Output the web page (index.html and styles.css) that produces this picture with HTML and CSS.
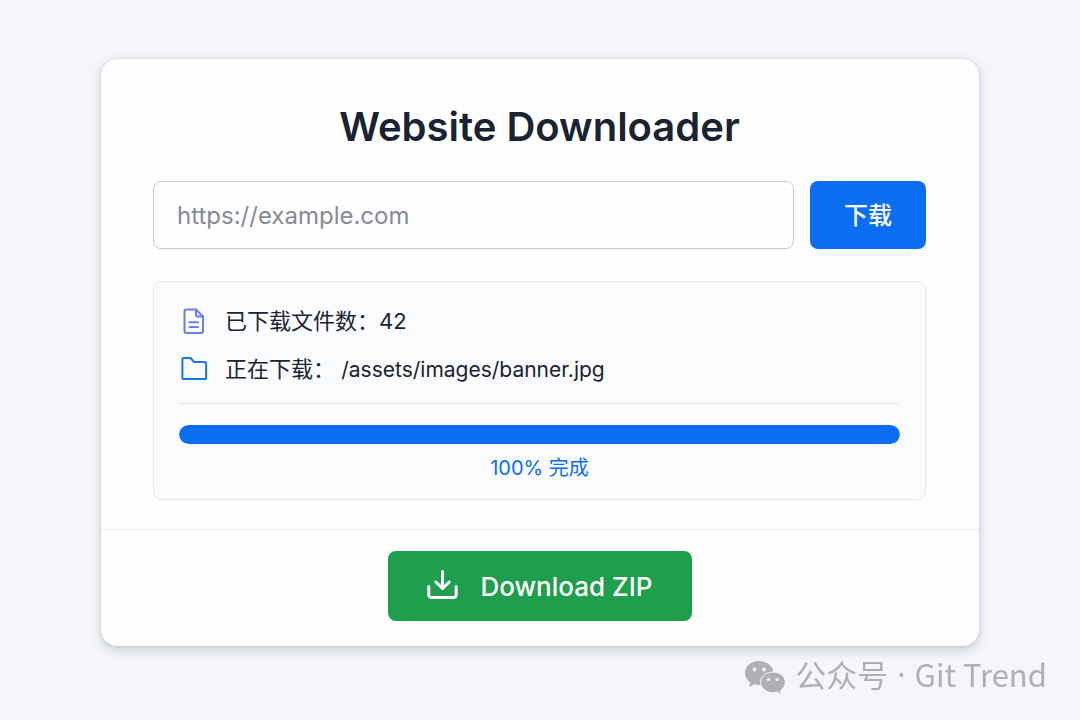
FILE: index.html
```
<!DOCTYPE html>
<html lang="zh-CN">
<head>
  <meta charset="UTF-8" />
  <meta name="viewport" content="width=device-width, initial-scale=1.0" />
  <title>Website Downloader</title>
  <link rel="stylesheet" href="styles.css">
</head>
<body>
  <!-- Downloader card -->
  <main class="card">
    <div class="card-body">
      <h1>Website Downloader</h1>

      <form class="url-form">
        <input type="url" id="urlInput" placeholder="https://example.com" aria-label="https://example.com" />
        <button type="submit" class="start-btn">下载</button>
      </form>

      <section class="status">
        <div class="status-row">
          <svg class="icon icon-file" viewBox="0 0 30 30">
            <path d="M7.5 3.500h9.500l7 7V25a2 2 0 0 1-2 2H7.500a2 2 0 0 1-2-2V5.500a2 2 0 0 1 2-2z" />
            <path d="M17 3.500V9a1.500 1.500 0 0 0 1.500 1.500H24M10.500 16.200h8.500M10.500 21h8.500" />
          </svg>
          <span class="status-label">已下载文件数：42</span>
        </div>
        <div class="status-row">
          <svg class="icon icon-folder" viewBox="0 0 30 30">
            <path d="M5 4h6.500l3.600 4h10.400a1.600 1.600 0 0 1 1.600 1.600v13.800a1.600 1.600 0 0 1-1.600 1.600H5a1.600 1.600 0 0 1-1.600-1.600V5.600a1.600 1.600 0 0 1 1.600-1.600z" />
          </svg>
          <span class="status-label">正在下载： <span class="file-path">/assets/images/banner.jpg</span></span>
        </div>
        <div class="progress">
          <div class="progress-track">
            <div class="progress-fill" style="width: 100%"></div>
          </div>
          <p class="progress-text">100% 完成</p>
        </div>
      </section>
    </div>

    <div class="card-footer">
      <button type="button" class="zip-btn">
        <svg class="zip-icon" viewBox="0 0 34 34">
          <path d="M16.500 2.500v17M9.800 13L16.500 19.500l6.700-6.500M2.800 17.500V26a2.500 2.500 0 0 0 2.500 2.500h22.400a2.500 2.500 0 0 0 2.500-2.500V17.500" />
        </svg>
        <span>Download ZIP</span>
      </button>
    </div>
  </main>

  <!-- Account tag -->
  <div class="account">
    <svg class="account-icon" viewBox="0 0 42 36">
      <path class="bubble" d="M15 1C7 1 1 6.300 1 13c0 3.800 2 7 5.200 9.300L5 27l5.200-2.800c1.500.5 3.200.8 4.800.8 8 0 14.500-5.400 14.500-12S23 1 15 1z" />
      <path class="bubble bubble-front" d="M29 12c-7 0-12.500 4.600-12.500 10.300S22 32.600 29 32.600c1.500 0 3-.2 4.300-.6L37.500 34.500l-1-4c3-2 4.800-4.900 4.800-8.200C41.300 16.600 36 12 29 12z" />
      <circle cx="10.500" cy="9.500" r="1.900" />
      <circle cx="20" cy="9.500" r="1.900" />
      <circle cx="24.500" cy="19.500" r="1.600" />
      <circle cx="33" cy="19.500" r="1.600" />
    </svg>
    <span>公众号</span>
    <span class="account-dot">·</span>
    <span>Git Trend</span>
  </div>
</body>
</html>
```

FILE: styles.css
```
:root {
  --page-bg: #f4f6fa;
  --text-color: #1a2332;
  --blue: #0b6df0;
  --green: #1f9e4d;
  --line: #e5e7eb;
}

* {
  box-sizing: border-box;
}

body {
  margin: 0;
  min-height: 100vh;
  padding: 59px 32px 20px;
  font-family: Inter, "Noto Sans CJK SC", sans-serif;
  font-size: 22px;
  color: var(--text-color);
  background: var(--page-bg);
}

/* Card */
.card {
  max-width: 878px;
  margin: 0 auto;
  background: #fefefe;
  border-radius: 16px;
  box-shadow: 0 0 2px rgba(30, 40, 60, 0.2), 0 4px 12px rgba(30, 40, 60, 0.2);
}

.card-body {
  padding: 42px 53px 29px 52px;
}

h1 {
  margin: 0 0 28px;
  font-size: 40px;
  font-weight: 600;
  line-height: 52px;
  text-align: center;
}

/* URL form */
.url-form {
  display: flex;
  gap: 16px;
  margin-bottom: 32px;
}

input {
  flex: 1;
  min-width: 0;
  height: 68px;
  padding: 0 23px;
  border: 1px solid #c6cad2;
  border-radius: 8px;
  background: #fefefe;
  font-family: inherit;
  font-size: 24px;
  color: var(--text-color);
}

input::placeholder {
  color: #858b97;
}

button {
  border: none;
  border-radius: 8px;
  color: white;
  font-family: inherit;
  cursor: pointer;
}

.start-btn {
  width: 116px;
  padding: 0 0 4px;
  background: var(--blue);
  font-size: 24px;
  font-weight: 500;
}

/* Download status */
.status {
  padding: 15px 25px;
  border: 1px solid var(--line);
  border-radius: 8px;
  background: #fafbfc;
}

.status-row {
  display: flex;
  align-items: center;
  gap: 16px;
  min-height: 48px;
}

.status-label {
  padding-bottom: 4px;
}

.file-path {
  font-size: 21px;
}

.icon {
  width: 30px;
  height: 30px;
  flex-shrink: 0;
  fill: none;
  stroke-width: 2;
  stroke-linecap: round;
  stroke-linejoin: round;
}

.icon-file {
  stroke: #6b7fe0;
}

.icon-folder {
  stroke: #1a77e6;
}

.progress {
  margin-top: 10px;
  padding-top: 21px;
  border-top: 1px solid var(--line);
}

.progress-track {
  height: 19px;
  border-radius: 10px;
  background: var(--line);
  overflow: hidden;
}

.progress-fill {
  height: 100%;
  border-radius: 10px;
  background: var(--blue);
}

.progress-text {
  margin: 8px 0 0;
  font-size: 20px;
  line-height: 32px;
  text-align: center;
  color: var(--blue);
}

/* Footer */
.card-footer {
  display: flex;
  justify-content: center;
  padding: 21px 24px 25px;
  border-top: 1px solid #eceef1;
}

.zip-btn {
  display: flex;
  align-items: center;
  gap: 21px;
  height: 70px;
  padding: 0 40px 0 38px;
  background: var(--green);
  font-size: 26px;
  font-weight: 500;
}

.zip-icon {
  width: 34px;
  height: 34px;
  fill: none;
  stroke: white;
  stroke-width: 3;
  stroke-linecap: round;
  stroke-linejoin: round;
}

/* Account tag */
.account {
  position: fixed;
  right: 33px;
  bottom: 24px;
  display: flex;
  align-items: flex-end;
  gap: 9px;
  font-family: "Noto Sans CJK SC", sans-serif;
  font-size: 31px;
  line-height: 44px;
  color: #aeb0b4;
}

.account-dot {
  font-family: "Noto Sans", sans-serif;
}

.account-icon {
  width: 42px;
  height: 36px;
  fill: var(--page-bg);
}

.bubble {
  fill: #aeb0b4;
}

.bubble-front {
  stroke: var(--page-bg);
  stroke-width: 1;
}
```
